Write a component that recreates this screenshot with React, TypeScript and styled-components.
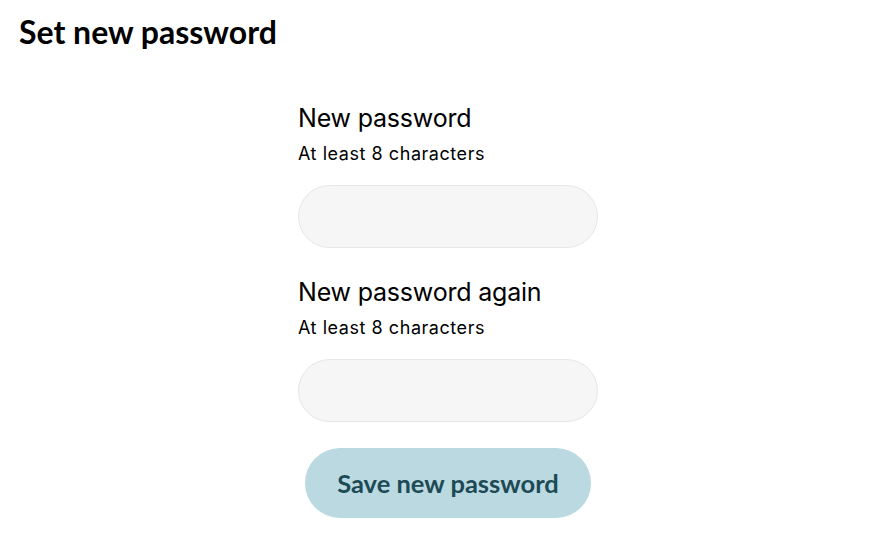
import React from "react";
import styled, { createGlobalStyle } from "styled-components";

const Global = createGlobalStyle`
  html, body { margin: 0; padding: 0; background: #fff; }
  body { font-family: "Inter", "Noto Sans", sans-serif; color: #000; }
`;

const Page = styled.div`
  width: 894px;
  height: 536px;
  box-sizing: border-box;
  padding: 12px 17px 0 19px;
`;

const Title = styled.h1`
  margin: 0;
  font-family: "Lato", sans-serif;
  font-weight: 700;
  font-size: 32px;
  line-height: 40px;
  color: #000;
`;

const Form = styled.form`
  width: 300px;
  margin: 50px auto 0;
  display: flex;
  flex-direction: column;
  gap: 26px;
`;

const Field = styled.div`
  display: flex;
  flex-direction: column;
  & + & {
    margin-top: 2px;
  }
`;

const Label = styled.label`
  font-family: "Inter", sans-serif;
  font-size: 25px;
  line-height: 32px;
  font-weight: 400;
  color: #000;
  letter-spacing: -0.2px;
`;

const Hint = styled.div`
  font-family: "Inter", sans-serif;
  font-size: 18px;
  line-height: 24px;
  margin-top: 8px;
  letter-spacing: 0.55px;
  color: #000;
`;

const Input = styled.input`
  margin-top: 19px;
  height: 63px;
  box-sizing: border-box;
  border: 1px solid #e6e6e6;
  background: #f6f6f6;
  border-radius: 32px;
  padding: 0 24px;
  font-size: 18px;
  outline: none;
`;

const Button = styled.button`
  align-self: center;
  width: 286px;
  height: 70px;
  border: none;
  border-radius: 35px;
  background: #bad9e1;
  color: #1d4a55;
  font-family: "Lato", sans-serif;
  font-weight: 700;
  font-size: 25.5px;
  cursor: pointer;
`;

export default function App() {
  return (
    <>
      <Global />
      <Page>
        <Title>Set new password</Title>
        <Form onSubmit={(e) => e.preventDefault()}>
          <Field>
            <Label>New password</Label>
            <Hint>At least 8 characters</Hint>
            <Input type="password" />
          </Field>
          <Field>
            <Label>New password again</Label>
            <Hint>At least 8 characters</Hint>
            <Input type="password" />
          </Field>
          <Button type="submit">Save new password</Button>
        </Form>
      </Page>
    </>
  );
}
